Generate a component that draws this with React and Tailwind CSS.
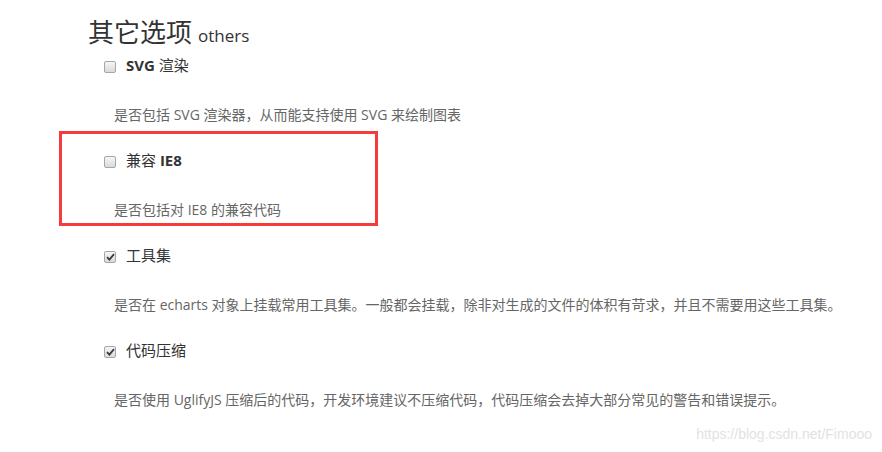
const options = [
  {
    label: (
      <>
        <span className="font-bold">SVG</span> 渲染
      </>
    ),
    desc: '是否包括 SVG 渲染器，从而能支持使用 SVG 来绘制图表',
    checked: false,
  },
  {
    label: (
      <>
        兼容 <span className="font-bold">IE8</span>
      </>
    ),
    desc: '是否包括对 IE8 的兼容代码',
    checked: false,
    highlight: true,
  },
  {
    label: '工具集',
    desc: '是否在 echarts 对象上挂载常用工具集。一般都会挂载，除非对生成的文件的体积有苛求，并且不需要用这些工具集。',
    checked: true,
  },
  {
    label: '代码压缩',
    desc: '是否使用 UglifyJS 压缩后的代码，开发环境建议不压缩代码，代码压缩会去掉大部分常见的警告和错误提示。',
    checked: true,
  },
];

const Checkbox = ({ checked }) => (
  <span className="mt-[3px] flex h-[12px] w-[12px] shrink-0 items-center justify-center rounded-[2px] border border-[#a6a6a6] bg-gradient-to-b from-[#f6f6f6] to-[#dadada]">
    {checked && (
      <svg width="9" height="8" viewBox="0 0 9 8">
        <path d="M1 4.2 L3.4 6.6 L8 1.2" fill="none" stroke="#3a3a3a" strokeWidth="1.8" />
      </svg>
    )}
  </span>
);

export default function App() {
  return (
    <div className="relative h-[452px] w-[882px] overflow-hidden bg-white font-['Open_Sans','Noto_Sans_CJK_SC',sans-serif] text-[#333]">
      <h3 className="flex h-[36px] items-baseline gap-[6px] pl-[88px] pt-[19px] text-[26px] font-normal leading-[26px] text-[#333]">
        <span>其它选项</span>
        <span className="text-[17px] leading-[26px]">others</span>
      </h3>

      <div className="flex flex-col">
        {options.map((o, i) => (
          <div
            key={i}
            className={`ml-[59px] h-[95px] border-[3px] pl-[42px] pt-[14px] ${
              o.highlight ? 'w-[319px] border-[#f53b3b]' : 'border-transparent'
            }`}
          >
            <label className="flex h-[24px] items-center gap-[10px]">
              <Checkbox checked={o.checked} />
              <span className="text-[15px] leading-[24px] text-[#333]">{o.label}</span>
            </label>
            <p className="mt-[26px] h-[24px] whitespace-nowrap pl-[10px] text-[14px] leading-[24px] text-[#666]">
              {o.desc}
            </p>
          </div>
        ))}
      </div>

      <span className="absolute bottom-[7px] right-[10px] font-['Liberation_Sans',sans-serif] text-[14px] text-[#e2e2e2]">
        https://blog.csdn.net/Fimooo
      </span>
    </div>
  );
}
